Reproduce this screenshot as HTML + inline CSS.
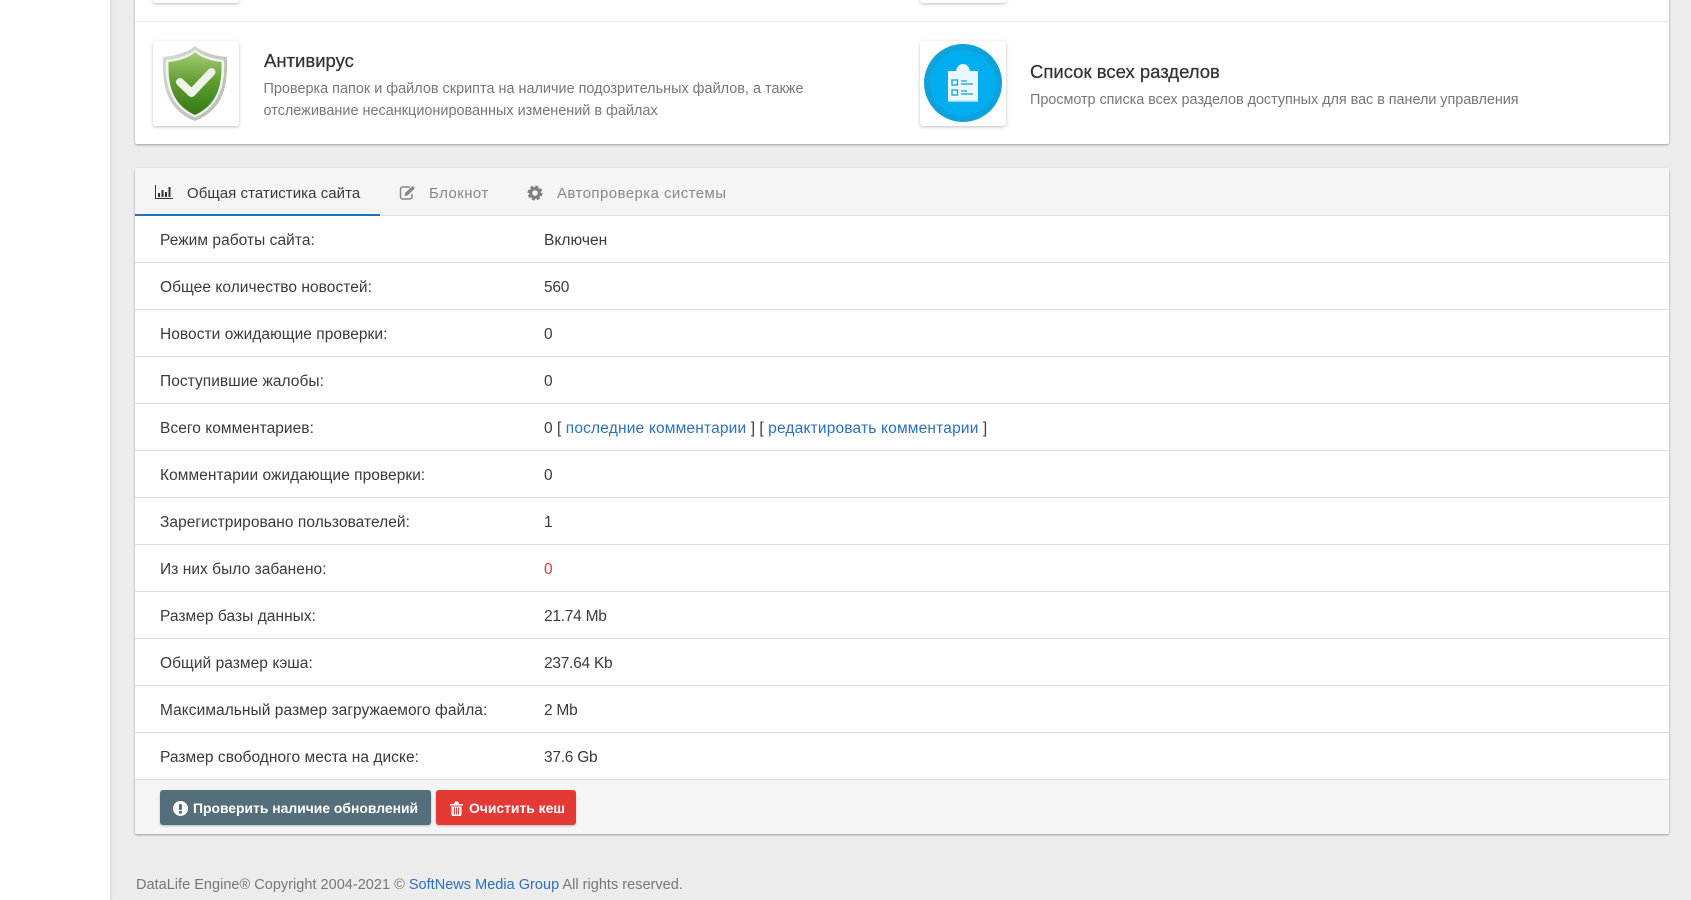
<!DOCTYPE html>
<html lang="ru"><head><meta charset="utf-8"><title>DataLife Engine</title>
<style>
*{box-sizing:border-box}
html,body{margin:0;padding:0}
body{width:1691px;height:900px;overflow:hidden;background:#ececec;position:relative;font-family:"Liberation Sans","DejaVu Sans",sans-serif;font-size:15px;color:#3a3a3a}
.side{position:absolute;left:0;top:0;width:111px;height:900px;background:#fff;border-right:1px solid #ddd;box-shadow:1px 0 1px rgba(0,0,0,.05)}
.card{position:absolute;left:135px;width:1534px;background:#fff;box-shadow:0 1px 2px rgba(0,0,0,.35);border-radius:2px}
.top{top:-20px;height:164px}
.tile{position:absolute;width:86px;height:85px;background:#fff;border-radius:3px;box-shadow:0 1px 3px rgba(0,0,0,.25)}
.t{position:absolute;font-size:18.5px;color:#333;white-space:nowrap;-webkit-text-stroke:.25px #333}
.d{position:absolute;font-size:14.44px;line-height:22px;color:#777;white-space:nowrap}
.hr{position:absolute;left:0;right:0;height:1px;background:#ececec}
.stat{top:168px;height:666px}
.tabs{position:absolute;left:0;top:0;width:100%;height:48px;background:#f5f5f5;border-bottom:1px solid #ddd}
.tab{position:absolute;top:0;height:48px;line-height:52px;white-space:nowrap;color:#888;letter-spacing:.43px}
.tab.on{color:#3a3a3a;letter-spacing:.05px}
.tabline{position:absolute;left:0;top:46px;width:245px;height:2px;background:#1e70b8}
.tab svg{position:absolute;top:17px;left:0}
.row{position:absolute;left:0;width:100%;height:47px;border-bottom:1px solid #ddd;line-height:50px;font-size:15.5px;letter-spacing:.05px}
.row b{font-weight:normal;position:absolute;left:25px;white-space:nowrap}
.row i{font-style:normal;position:absolute;left:409px;white-space:nowrap}
.row i.n{letter-spacing:-.25px}
.row a{letter-spacing:.18px}
a{color:#2c70bf;text-decoration:none}
.foot{position:absolute;left:0;top:612px;width:100%;height:54px;background:#f5f5f5;border-radius:0 0 2px 2px}
.btn{position:absolute;top:10px;height:35px;border-radius:3px;color:#fff;font-weight:bold;font-size:13.9px;line-height:37px;white-space:nowrap;box-shadow:0 1px 2px rgba(0,0,0,.25)}
.btn svg{position:absolute;top:11px}
.copy{position:absolute;left:136px;top:875px;font-size:14.5px;color:#777;white-space:nowrap;line-height:21px;letter-spacing:.02px}
</style></head><body>
<div class="side"></div>

<div class="card top">
  <div class="tile" style="left:18px;top:-62px"></div>
  <div class="tile" style="left:785px;top:-62px"></div>
  <div class="hr" style="top:41px"></div>

  <div class="tile" style="left:18px;top:61px">
    <svg width="86" height="85" viewBox="0 0 86 85">
      <defs>
        <linearGradient id="g1" x1="0" y1="0" x2="0" y2="1"><stop offset="0" stop-color="#a6cc72"/><stop offset=".5" stop-color="#5c9a30"/><stop offset="1" stop-color="#357a14"/></linearGradient>
        <linearGradient id="g2" x1="0" y1="0" x2="1" y2="1"><stop offset="0" stop-color="#d9dcd6"/><stop offset="1" stop-color="#b4b8b0"/></linearGradient>
      </defs>
      <path d="M42 5C34 12 21 15 10 16C9 42 12 68 42 80C72 68 75 42 74 16C63 15 50 12 42 5Z" fill="url(#g2)"/>
      <path d="M42 8.500C35 15 23 18 13 19C12 42 16 65 42 76.500C68 65 72 42 71 19C61 18 49 15 42 8.500Z" fill="#f1f3ef"/>
      <path d="M42 11C36 17 25 20 15.500 21C15 42 18 63 42 74C66 63 69 42 68.500 21C59 20 48 17 42 11Z" fill="url(#g1)"/>
      <path d="M27 41L38.500 52L58.500 31" fill="none" stroke="#eef2ea" stroke-width="8" stroke-linecap="round" stroke-linejoin="round"/>
    </svg>
  </div>
  <div class="t" style="left:129px;top:70px">Антивирус</div>
  <div class="d" style="left:128.500px;top:98px">Проверка папок и файлов скрипта на наличие подозрительных файлов, а также<br>отслеживание несанкционированных изменений в файлах</div>

  <div class="tile" style="left:785px;top:61px">
    <svg width="86" height="85" viewBox="0 0 86 85">
      <circle cx="43" cy="42" r="39" fill="#0ea2dd"/>
      <circle cx="43" cy="42" r="33" fill="#00aeef"/>
      <path d="M28 30H36C37 25 40 23 43 23C46 23 49 25 50 30H58V60H28Z" fill="#eaf7fc"/>
      <path d="M28 60H58" stroke="#bfe6f5" stroke-width="1.500"/>
      <rect x="32" y="39" width="5.500" height="5" fill="none" stroke="#0ea2dd" stroke-width="1.300"/>
      <rect x="32" y="49" width="5.500" height="5" fill="none" stroke="#0ea2dd" stroke-width="1.300"/>
      <path d="M41 40H47M41 43H53M41 50H47M41 53H53" stroke="#0ea2dd" stroke-width="1.300"/>
    </svg>
  </div>
  <div class="t" style="left:895px;top:81px">Список всех разделов</div>
  <div class="d" style="left:895px;top:109px;letter-spacing:-.05px">Просмотр списка всех разделов доступных для вас в панели управления</div>
</div>

<div class="card stat">
  <div class="tabs">
    <div class="tab on" style="left:20px;padding-left:32px">
      <svg width="18" height="14" viewBox="0 0 18 14"><path d="M.5 0V13.5H18" fill="none" stroke="#333" stroke-width="1"/><path d="M3 8h2v4H3zM6.500 5h2v7h-2zM10 7h2v5h-2zM13.500 2h2v10h-2z" fill="#333"/></svg>
      Общая статистика сайта
    </div>
    <div class="tabline"></div>
    <div class="tab" style="left:264px;padding-left:30px">
      <svg width="17" height="15" viewBox="0 0 17 15"><path d="M11 2H3.500C2.500 2 1.500 3 1.500 4V12C1.500 13 2.500 14 3.500 14H11C12 14 13 13 13 12V9" fill="none" stroke="#888" stroke-width="1.500"/><path d="M6 8L13.500 1L16 3.300L8.500 10.500L5.500 11Z" fill="#888"/></svg>
      Блокнот
    </div>
    <div class="tab" style="left:392px;padding-left:30px">
      <svg width="16" height="16" viewBox="0 0 16 16"><circle cx="8" cy="8" r="4.400" fill="none" stroke="#808080" stroke-width="3.200"/><circle cx="8" cy="8" r="6.400" fill="none" stroke="#808080" stroke-width="2.200" stroke-dasharray="3 2.030"/></svg>
      Автопроверка системы
    </div>
  </div>
  <div class="row" style="top:48px"><b>Режим работы сайта:</b><i>Включен</i></div>
  <div class="row" style="top:95px"><b>Общее количество новостей:</b><i class="n">560</i></div>
  <div class="row" style="top:142px"><b>Новости ожидающие проверки:</b><i>0</i></div>
  <div class="row" style="top:189px"><b>Поступившие жалобы:</b><i>0</i></div>
  <div class="row" style="top:236px"><b>Всего комментариев:</b><i>0 [ <a href="#">последние комментарии</a> ] [ <a href="#">редактировать комментарии</a> ]</i></div>
  <div class="row" style="top:283px"><b>Комментарии ожидающие проверки:</b><i>0</i></div>
  <div class="row" style="top:330px"><b>Зарегистрировано пользователей:</b><i>1</i></div>
  <div class="row" style="top:377px"><b>Из них было забанено:</b><i style="color:#e53935">0</i></div>
  <div class="row" style="top:424px"><b>Размер базы данных:</b><i class="n">21.74 Mb</i></div>
  <div class="row" style="top:471px"><b>Общий размер кэша:</b><i class="n">237.64 Kb</i></div>
  <div class="row" style="top:518px"><b>Максимальный размер загружаемого файла:</b><i class="n">2 Mb</i></div>
  <div class="row" style="top:565px"><b>Размер свободного места на диске:</b><i class="n">37.6 Gb</i></div>
  <div class="foot">
    <div class="btn" style="left:25px;width:271px;background:#546e7a;padding-left:33px">
      <svg style="left:13px" width="15" height="15" viewBox="0 0 15 15"><circle cx="7.500" cy="7.500" r="7.500" fill="#fff"/><rect x="6" y="3" width="3" height="6" rx="1" fill="#546e7a"/><rect x="6" y="10" width="3" height="2.500" fill="#546e7a"/></svg>
      Проверить наличие обновлений
    </div>
    <div class="btn" style="left:301px;width:140px;background:#e53935;padding-left:33px">
      <svg style="left:14px" width="13" height="15" viewBox="0 0 13 15"><path d="M0 3H13V4.500H0ZM4 3L5 .5H8L9 3ZM1.500 5.500H11.500V13.500C11.500 14.300 11 15 10 15H3C2 15 1.500 14.300 1.500 13.500Z" fill="#fff"/><path d="M4.500 6.500V13.500M6.500 6.500V13.500M8.500 6.500V13.500" stroke="#e53935" stroke-width="1"/></svg>
      Очистить кеш
    </div>
  </div>
</div>

<div class="copy">DataLife Engine® Copyright 2004-2021 © <a href="#">SoftNews Media Group</a> All rights reserved.</div>
</body></html>
